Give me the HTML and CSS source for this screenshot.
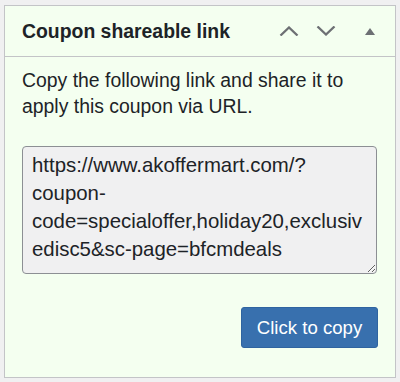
FILE: index.html
```html
<!DOCTYPE html>
<html lang="en">
<head>
  <meta charset="UTF-8" />
  <meta name="viewport" content="width=device-width, initial-scale=1.0" />
  <title>Coupon shareable link</title>
  <link rel="stylesheet" href="styles.css">
</head>
<body>
  <div class="postbox">
    <div class="postbox-header">
      <h2 class="postbox-title">Coupon shareable link</h2>
      <div class="handle-actions">
        <button class="handle-btn" aria-label="Move up">
          <svg width="20" height="10" viewBox="0 0 20 10"><path d="M1.5 9.5 L10 1.5 L18.5 9.5" fill="none" stroke="currentColor" stroke-width="2.3"/></svg>
        </button>
        <button class="handle-btn" aria-label="Move down">
          <svg width="20" height="10" viewBox="0 0 20 10"><path d="M1.5 0.5 L10 8.5 L18.5 0.5" fill="none" stroke="currentColor" stroke-width="2.3"/></svg>
        </button>
        <button class="handle-btn toggle" aria-label="Toggle panel">
          <svg width="10" height="7" viewBox="0 0 10 7"><path d="M5 0 L10 7 L0 7 Z" fill="currentColor"/></svg>
        </button>
      </div>
    </div>
    <div class="inside">
      <p class="intro">Copy the following link and share it to apply this coupon via URL.</p>
      <textarea class="share-link" id="shareLink" readonly>https://www.akoffermart.com/?coupon-code=specialoffer,holiday20,exclusivedisc5&amp;sc-page=bfcmdeals</textarea>
      <div class="actions">
        <button class="button-primary" id="copyBtn">Click to copy</button>
      </div>
    </div>
  </div>
</body>
</html>
```

FILE: styles.css
```css
* { box-sizing: border-box; margin: 0; padding: 0; }
body
{
  font-family: "Liberation Sans", Arial, sans-serif;
  background: #f0f0f1;
  padding: 5px 4px;
  color: #1d2327;
}
.postbox
{
  width: 392px;
  height: 373px;
  background: #f4fff0;
  border: 1px solid #c3c4c7;
}
.postbox-header
{
  display: flex;
  align-items: center;
  justify-content: space-between;
  height: 51px;
  padding: 0 20px 0 17px;
  border-bottom: 1px solid #c3c4c7;
}
.postbox-title
{
  font-size: 19.4px;
  font-weight: bold;
  color: #1d2327;
}
.handle-actions { display: flex; align-items: center; }
.handle-btn
{
  display: flex;
  align-items: center;
  justify-content: center;
  background: none;
  border: none;
  color: #6d7074;
  width: 20px;
  height: 20px;
  margin-left: 17px;
  cursor: pointer;
}
.handle-btn.toggle { margin-left: 29px; width: 10px; }
.inside { padding: 10px 17px 0 17px; }
.intro
{
  font-size: 19.4px;
  line-height: 26px;
  color: #1d2327;
}
.share-link
{
  display: block;
  width: 355px;
  height: 128px;
  margin-top: 27px;
  padding: 4px 9px;
  font-family: "Liberation Sans", Arial, sans-serif;
  font-size: 20.4px;
  line-height: 28px;
  color: #1d2327;
  background: #f0f0f1;
  border: 1px solid #8c8f94;
  border-radius: 4px;
  resize: vertical;
  overflow: hidden;
}
.actions
{
  display: flex;
  justify-content: flex-end;
  margin-top: 33px;
}
.button-primary
{
  width: 137px;
  height: 41px;
  background: #3870ae;
  color: #fff;
  border: 1px solid #2f64a0;
  border-radius: 3px;
  font-family: "Liberation Sans", Arial, sans-serif;
  font-size: 18.6px;
  cursor: pointer;
}
```
